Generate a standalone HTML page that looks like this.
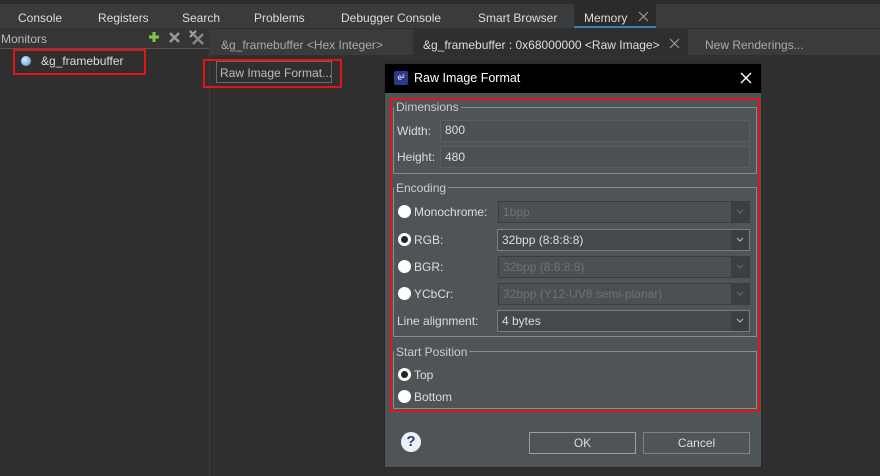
<!DOCTYPE html>
<html><head><style>
*{box-sizing:border-box;margin:0;padding:0}
body{width:880px;height:476px;background:#2f2f2f;font-family:"Liberation Sans",sans-serif;font-size:12px;color:#ddd;position:relative;overflow:hidden}
.a{position:absolute}
.t{position:absolute;white-space:nowrap}
.rad{position:absolute;width:13px;height:13px;border-radius:50%;background:#fff}
.rad.on::after{content:"";position:absolute;left:3px;top:3px;width:7px;height:7px;border-radius:50%;background:#222}
.cb{position:absolute;height:22px;background:#4c5052;border:1px solid #3a3d3f;color:#6e7275;padding:3px 4px;font-size:12px}
.cb.en{background:#45494a;border-color:#7a7d80;color:#ddd}
.cb .ar{position:absolute;right:0;top:0;width:18px;height:20px;background:#3c3f41}
.cb .ar svg{position:absolute;left:5px;top:7px}
.grp{position:absolute;border:1px solid #8a8d90;border-radius:1px}
.lg{position:absolute;background:#4f5456;padding:0 2px;color:#ccc}
</style></head><body>
<div class="a" style="left:0;top:0;width:880px;height:28px;background:#393b3d;border-top:4px solid #2b2b2b"></div>
<div class="t" style="left:18px;top:11px;color:#ddd">Console</div>
<div class="t" style="left:98px;top:11px">Registers</div>
<div class="t" style="left:182px;top:11px">Search</div>
<div class="t" style="left:254px;top:11px">Problems</div>
<div class="t" style="left:341px;top:11px">Debugger Console</div>
<div class="t" style="left:478px;top:11px">Smart Browser</div>
<div class="a" style="left:574px;top:4px;width:82px;height:24px;background:#2b2b2b;border-bottom:2px solid #3b7fb5"></div>
<div class="t" style="left:584px;top:11px">Memory</div>
<svg class="a" style="left:638px;top:11px" width="11" height="11"><path d="M1 1L10 10M10 1L1 10" stroke="#999" stroke-width="1.2"/></svg>
<div class="a" style="left:0;top:28px;width:209px;height:21px;background:#353535;border-bottom:1px solid #555"></div>
<div class="t" style="left:1px;top:32px;color:#bbb">Monitors</div>
<svg class="a" style="left:148px;top:31px" width="12" height="12"><path d="M6 1V11M1 6H11" stroke="#7ecb3e" stroke-width="3"/></svg>
<svg class="a" style="left:169px;top:32px" width="11" height="11"><path d="M1 1L10 10M10 1L1 10" stroke="#999" stroke-width="2.5"/></svg>
<svg class="a" style="left:189px;top:30px" width="15" height="15"><path d="M1 1L7 7M7 1L1 7" stroke="#aaa" stroke-width="2"/><path d="M4 4L14 14M14 4L4 14" stroke="#888" stroke-width="2.5"/></svg>
<div class="a" style="left:209px;top:28px;width:1px;height:448px;background:#3c3c3c"></div>
<div class="a" style="left:13px;top:49px;width:133px;height:26px;border:2px solid #e3131b"></div>
<div class="a" style="left:21px;top:56px;width:10px;height:10px;border-radius:50%;background:radial-gradient(circle at 35% 35%,#d8ecff,#4a90d0)"></div>
<div class="t" style="left:41px;top:54px;font-size:12px">&amp;g_framebuffer</div>
<div class="a" style="left:210px;top:29px;width:670px;height:26px;background:#393b3d"></div>
<div class="t" style="left:221px;top:38px;color:#aaa">&amp;g_framebuffer &lt;Hex Integer&gt;</div>
<div class="a" style="left:413px;top:29px;width:275px;height:26px;background:#2f2f2f"></div>
<div class="t" style="left:423px;top:38px">&amp;g_framebuffer : 0x68000000 &lt;Raw Image&gt;</div>
<svg class="a" style="left:669px;top:38px" width="11" height="11"><path d="M1 1L10 10M10 1L1 10" stroke="#999" stroke-width="1.2"/></svg>
<div class="t" style="left:705px;top:38px;color:#aaa">New Renderings...</div>
<div class="a" style="left:203px;top:59px;width:139px;height:29px;border:2px solid #e3131b"></div>
<div class="a" style="left:216px;top:61px;width:116px;height:22px;border:1px solid #6a6a6a"></div>
<div class="t" style="left:220px;top:66px;color:#bbb">Raw Image Format...</div>
<div class="a" style="left:384px;top:63px;width:378px;height:405px;background:#4f5456;border:1px solid #2a2a2a"></div>
<div class="a" style="left:385px;top:64px;width:376px;height:29px;background:#000"></div>
<div class="a" style="left:394px;top:71px;width:14px;height:14px;background:#2d3a8c;border-radius:2px;color:#fff;font-size:8px;text-align:center;line-height:14px">e²</div>
<div class="t" style="left:414px;top:71px;color:#fff;font-size:12.5px">Raw Image Format</div>
<svg class="a" style="left:740px;top:72px" width="12" height="12"><path d="M1 1L11 11M11 1L1 11" stroke="#fff" stroke-width="1.4"/></svg>
<div class="a" style="left:390px;top:98px;width:370px;height:314px;border:2px solid #e3131b"></div>
<div class="grp" style="left:393px;top:107px;width:364px;height:67px"></div>
<div class="lg" style="left:394px;top:100px">Dimensions</div>
<div class="t" style="left:397px;top:124px;color:#ddd">Width:</div>
<div class="a" style="left:440px;top:120px;width:310px;height:22px;background:#4c5052;border:1px solid #5a5e60"></div>
<div class="t" style="left:445px;top:123px;color:#ddd">800</div>
<div class="t" style="left:397px;top:150px;color:#ddd">Height:</div>
<div class="a" style="left:440px;top:146px;width:310px;height:22px;background:#4c5052;border:1px solid #5a5e60"></div>
<div class="t" style="left:445px;top:150px;color:#ddd">480</div>
<div class="grp" style="left:393px;top:187px;width:364px;height:150px"></div>
<div class="lg" style="left:394px;top:181px">Encoding</div>
<div class="rad" style="left:398px;top:205px"></div><div class="t" style="left:414px;top:205px">Monochrome:</div>
<div class="cb" style="left:498px;top:201px;width:252px">1bpp<div class="ar"><svg width="8" height="5"><path d="M1 1L4 4L7 1" stroke="#666" fill="none"/></svg></div></div>
<div class="rad on" style="left:398px;top:233px"></div><div class="t" style="left:414px;top:233px">RGB:</div>
<div class="cb en" style="left:497px;top:229px;width:253px">32bpp (8:8:8:8)<div class="ar"><svg width="8" height="5"><path d="M1 1L4 4L7 1" stroke="#bbb" fill="none"/></svg></div></div>
<div class="rad" style="left:398px;top:260px"></div><div class="t" style="left:414px;top:260px">BGR:</div>
<div class="cb" style="left:498px;top:256px;width:252px">32bpp (8:8:8:8)<div class="ar"><svg width="8" height="5"><path d="M1 1L4 4L7 1" stroke="#666" fill="none"/></svg></div></div>
<div class="rad" style="left:398px;top:287px"></div><div class="t" style="left:414px;top:287px">YCbCr:</div>
<div class="cb" style="left:498px;top:283px;width:252px">32bpp (Y12-UV8 semi-planar)<div class="ar"><svg width="8" height="5"><path d="M1 1L4 4L7 1" stroke="#666" fill="none"/></svg></div></div>
<div class="t" style="left:397px;top:314px">Line alignment:</div>
<div class="cb en" style="left:497px;top:310px;width:253px">4 bytes<div class="ar"><svg width="8" height="5"><path d="M1 1L4 4L7 1" stroke="#bbb" fill="none"/></svg></div></div>
<div class="grp" style="left:393px;top:351px;width:364px;height:58px"></div>
<div class="lg" style="left:394px;top:345px">Start Position</div>
<div class="rad on" style="left:398px;top:368px"></div><div class="t" style="left:414px;top:368px">Top</div>
<div class="rad" style="left:398px;top:390px"></div><div class="t" style="left:414px;top:390px">Bottom</div>
<div class="a" style="left:401px;top:432px;width:20px;height:20px;border-radius:50%;background:#eef2f8;color:#2c3e6a;font-weight:bold;font-size:15px;text-align:center;line-height:20px">?</div>
<div class="a" style="left:529px;top:432px;width:107px;height:22px;border:1px solid #9a9ea0;background:#4f5456;text-align:center;line-height:20px;color:#ddd">OK</div>
<div class="a" style="left:643px;top:432px;width:107px;height:22px;border:1px solid #7e8284;background:#4f5456;text-align:center;line-height:20px;color:#ddd">Cancel</div>
</body></html>
